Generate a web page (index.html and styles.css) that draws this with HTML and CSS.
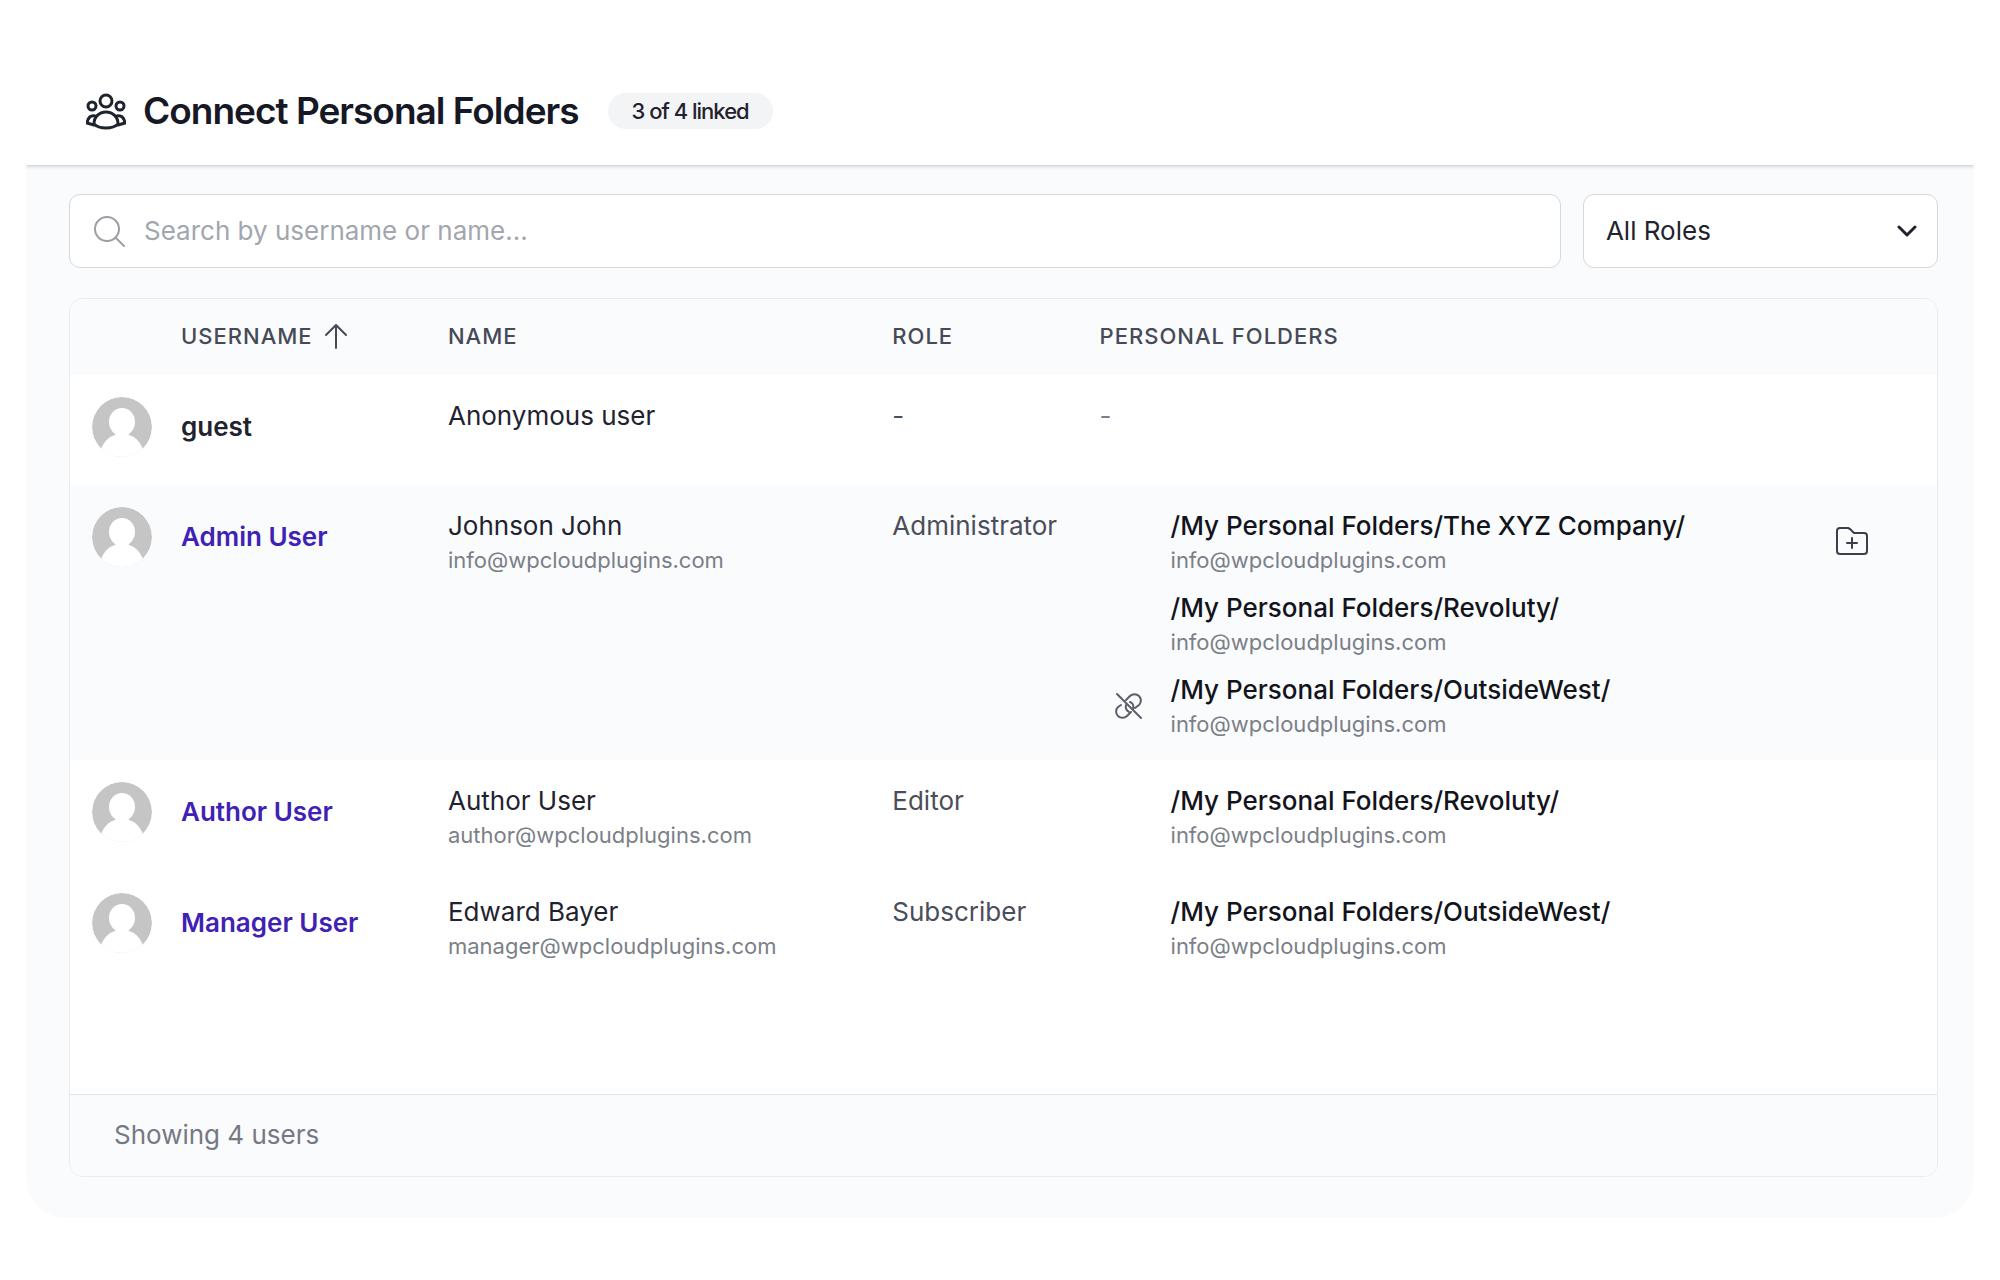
FILE: index.html
```html
<!DOCTYPE html>
<html lang="en">
<head>
    <meta charset="UTF-8">
    <meta name="viewport" content="width=device-width, initial-scale=1.0">
    <title>Connect Personal Folders</title>
    <link rel="stylesheet" href="styles.css">
</head>
<body>
    <svg class="icon-defs" aria-hidden="true">
        <symbol id="avatar" viewBox="0 0 60 60">
            <circle cx="30" cy="30" r="30" fill="#c5c5c5"/>
            <ellipse cx="30" cy="25" rx="13" ry="14" fill="#fff"/>
            <path fill="#fff" d="M0 60v-8h9c3-7 7-12 14-14 1-1 1-2 0-4h14c-1 2-1 3 0 4 7 2 11 7 14 14h9v8z"/>
        </symbol>
        <symbol id="unlink" viewBox="0 0 28 28">
            <path d="M2 2l24 24M11 8l4-4a6 6 0 0 1 9 9l-4 3M15 10c3 1 4 4 3 7M16 20l-4 4a6 6 0 0 1-9-9l3-2M11 13c-1 3 0 5 3 7"/>
        </symbol>
    </svg>

    <div class="modal">
        <header class="modal-header">
            <svg class="group-icon" viewBox="0 0 40 38">
                <circle cx="20" cy="9" r="6"/>
                <circle cx="6" cy="14" r="4"/>
                <circle cx="34" cy="14" r="4"/>
                <path d="M8 32c0-7 5-12 12-12s12 5 12 12c-3 3-7 4-12 4s-9-1-12-4z"/>
                <path d="M9 24c-5-1-7 2-8 7l7 2M31 24c5-1 7 2 8 7l-7 2"/>
            </svg>
            <h1>Connect Personal Folders</h1>
            <span class="badge">3 of 4 linked</span>
        </header>

        <main class="modal-body">
            <form class="filters">
                <div class="search">
                    <svg viewBox="0 0 32 32"><circle cx="14" cy="14" r="12"/><path d="M23 23l8 8"/></svg>
                    <input type="text" id="search" aria-label="Search users" placeholder="Search by username or name...">
                </div>
                <div class="role-select">
                    <select id="role" aria-label="Role">
                        <option>All Roles</option>
                        <option>Administrator</option>
                        <option>Editor</option>
                        <option>Subscriber</option>
                    </select>
                    <svg viewBox="0 0 20 12"><path d="M2 2l8 8 8-8"/></svg>
                </div>
            </form>

            <section class="panel">
                <table>
                    <colgroup>
                        <col class="col-avatar">
                        <col class="col-username">
                        <col class="col-name">
                        <col class="col-role">
                        <col>
                        <col class="col-action">
                    </colgroup>
                    <thead>
                        <tr>
                            <th></th>
                            <th><span class="sort">Username <svg viewBox="0 0 22 26"><path d="M11 25V2M1 12L11 2l10 10"/></svg></span></th>
                            <th>Name</th>
                            <th>Role</th>
                            <th>Personal Folders</th>
                            <th></th>
                        </tr>
                    </thead>
                    <tbody>
                        <tr>
                            <td><svg class="avatar"><use href="#avatar"/></svg></td>
                            <td><div class="username">guest</div></td>
                            <td><div class="name">Anonymous user</div></td>
                            <td class="role">-</td>
                            <td class="none">-</td>
                            <td></td>
                        </tr>
                        <tr class="active">
                            <td><svg class="avatar"><use href="#avatar"/></svg></td>
                            <td><div class="username"><a href="#">Admin User</a></div></td>
                            <td>
                                <div class="name">Johnson John</div>
                                <div class="email">info@wpcloudplugins.com</div>
                            </td>
                            <td class="role">Administrator</td>
                            <td>
                                <ul class="folders">
                                    <li>
                                        <div class="name">/My Personal Folders/The XYZ Company/</div>
                                        <div class="email">info@wpcloudplugins.com</div>
                                    </li>
                                    <li>
                                        <div class="name">/My Personal Folders/Revoluty/</div>
                                        <div class="email">info@wpcloudplugins.com</div>
                                    </li>
                                    <li>
                                        <button type="button" class="unlink" aria-label="Unlink folder"><svg><use href="#unlink"/></svg></button>
                                        <div class="name">/My Personal Folders/OutsideWest/</div>
                                        <div class="email">info@wpcloudplugins.com</div>
                                    </li>
                                </ul>
                            </td>
                            <td>
                                <button type="button" class="add-folder" aria-label="Add folder">
                                    <svg viewBox="0 0 34 30"><path d="M2 24V5a3 3 0 0 1 3-3h8l2 1 4 4h10a3 3 0 0 1 3 3v15a3 3 0 0 1-3 3H5a3 3 0 0 1-3-3zM17 12v10M12 17h10"/></svg>
                                </button>
                            </td>
                        </tr>
                        <tr>
                            <td><svg class="avatar"><use href="#avatar"/></svg></td>
                            <td><div class="username"><a href="#">Author User</a></div></td>
                            <td>
                                <div class="name">Author User</div>
                                <div class="email">author@wpcloudplugins.com</div>
                            </td>
                            <td class="role">Editor</td>
                            <td>
                                <ul class="folders">
                                    <li>
                                        <div class="name">/My Personal Folders/Revoluty/</div>
                                        <div class="email">info@wpcloudplugins.com</div>
                                    </li>
                                </ul>
                            </td>
                            <td></td>
                        </tr>
                        <tr>
                            <td><svg class="avatar"><use href="#avatar"/></svg></td>
                            <td><div class="username"><a href="#">Manager User</a></div></td>
                            <td>
                                <div class="name">Edward Bayer</div>
                                <div class="email">manager@wpcloudplugins.com</div>
                            </td>
                            <td class="role">Subscriber</td>
                            <td>
                                <ul class="folders">
                                    <li>
                                        <div class="name">/My Personal Folders/OutsideWest/</div>
                                        <div class="email">info@wpcloudplugins.com</div>
                                    </li>
                                </ul>
                            </td>
                            <td></td>
                        </tr>
                    </tbody>
                </table>
                <footer class="panel-footer">Showing 4 users</footer>
            </section>
        </main>
    </div>
</body>
</html>
```

FILE: styles.css
```css
* {
    box-sizing: border-box;
}
body {
    font-family: Inter, sans-serif;
    font-size: 26px;
    line-height: 36px;
    margin: 0;
    padding: 57px 26px 62px;
    min-height: 100vh;
    display: flex;
    flex-direction: column;
    background-color: #fff;
    color: #1f232e;
}
svg {
    fill: none;
    stroke: currentColor;
    stroke-width: 2;
    stroke-linecap: round;
    stroke-linejoin: round;
    flex-shrink: 0;
}
button {
    border: none;
    background: none;
    padding: 0;
    cursor: pointer;
}
.icon-defs {
    position: absolute;
    width: 0;
    height: 0;
}
.modal {
    flex: 1;
    display: flex;
    flex-direction: column;
    border-radius: 40px;
    background-color: #fafbfc;
}

/* header */
.modal-header {
    display: flex;
    align-items: center;
    height: 108px;
    padding: 0 60px;
    background-color: #fff;
    box-shadow: 0 1px 4px rgba(0, 0, 0, 0.22);
    clip-path: inset(0 0 -8px 0);
    letter-spacing: -1px;
}
.group-icon {
    width: 40px;
    height: 38px;
    margin-right: 17px;
    stroke-width: 3;
}
.modal-header h1 {
    margin: 0;
    font-size: 37px;
    line-height: 48px;
    font-weight: 600;
    color: #161925;
}
.badge {
    margin-left: 29px;
    padding: 0 24px;
    border-radius: 18px;
    background-color: #f3f4f6;
    font-size: 22px;
    font-weight: 500;
}

/* search and role filter */
.modal-body {
    flex: 1;
    display: flex;
    flex-direction: column;
    gap: 30px;
    padding: 29px 36px 41px 43px;
}
.filters {
    display: flex;
    gap: 22px;
}
.search,
.role-select {
    display: flex;
    align-items: center;
    height: 74px;
    border: 1px solid #d5d8dc;
    border-radius: 11px;
    background-color: #fff;
}
.search {
    flex: 1;
    padding: 0 23px;
    gap: 19px;
    color: #9a9ea7;
}
.search svg {
    width: 32px;
    height: 32px;
}
.search input {
    flex: 1;
    min-width: 0;
    padding: 0;
    border: none;
    outline: none;
    background: none;
    font: inherit;
    color: #1f232e;
}
.search input::placeholder {
    color: #a2a6ae;
}
.role-select {
    position: relative;
    width: 19%;
}
.role-select select {
    width: 100%;
    height: 100%;
    padding: 0 22px;
    border: none;
    border-radius: 11px;
    appearance: none;
    background: none;
    font: inherit;
    color: inherit;
}
.role-select svg {
    position: absolute;
    right: 20px;
    width: 20px;
    height: 12px;
    stroke-width: 3;
    pointer-events: none;
}

/* table */
.panel {
    flex: 1;
    display: flex;
    flex-direction: column;
    justify-content: space-between;
    border: 1px solid #e9ebee;
    border-radius: 14px;
    background-color: #fff;
    overflow: hidden;
}
table {
    width: 100%;
    table-layout: fixed;
    border-collapse: collapse;
}
.col-avatar {
    width: 89px;
}
.col-username {
    width: 14.3%;
}
.col-name {
    width: 23.8%;
}
.col-role {
    width: 11.1%;
}
.col-action {
    width: 124px;
}
th {
    height: 76px;
    padding: 0 22px 2px;
    background-color: #fafbfc;
    font-size: 22px;
    font-weight: 500;
    letter-spacing: 1px;
    text-align: left;
    text-transform: uppercase;
    white-space: nowrap;
    color: #464a57;
}
.sort {
    display: flex;
    align-items: center;
    gap: 12px;
}
.sort svg {
    width: 22px;
    height: 26px;
}
td {
    padding: 22px 22px 20px;
    vertical-align: top;
    white-space: nowrap;
}
.active {
    background-color: #fafbfc;
}
.avatar {
    display: block;
    width: 60px;
    height: 60px;
    border-radius: 50%;
    stroke: none;
}
.username {
    display: flex;
    align-items: center;
    height: 60px;
    margin-bottom: 8px;
    font-weight: 600;
}
.username a {
    color: #3f22b3;
    text-decoration: none;
}
.name,
.role,
.none {
    line-height: 37px;
}
.email {
    font-size: 22px;
    line-height: 32px;
    color: #7b7f88;
}
.role {
    color: #4a4e5a;
}
.none {
    color: #7b7f88;
}
.folders {
    display: flex;
    flex-direction: column;
    gap: 13px;
    margin: 0;
    padding: 0;
    list-style: none;
}
.folders li {
    display: grid;
    grid-template-columns: 71px 1fr;
}
.folders .name {
    grid-column: 2;
    font-weight: 500;
    color: #12141c;
}
.folders .email {
    grid-column: 2;
}
.unlink {
    grid-row: 1 / 3;
    width: 58px;
    color: #5b5f6a;
}
.unlink svg {
    display: block;
    width: 28px;
    height: 28px;
    margin: 0 auto;
}
.add-folder {
    display: block;
    height: 68px;
    color: #3b3f4b;
}
.add-folder svg {
    display: block;
    width: 34px;
    height: 30px;
}

.panel-footer {
    height: 82px;
    padding: 22px 44px;
    border-top: 1px solid #e3e6e9;
    background-color: #fafbfc;
    color: #757983;
}
```
